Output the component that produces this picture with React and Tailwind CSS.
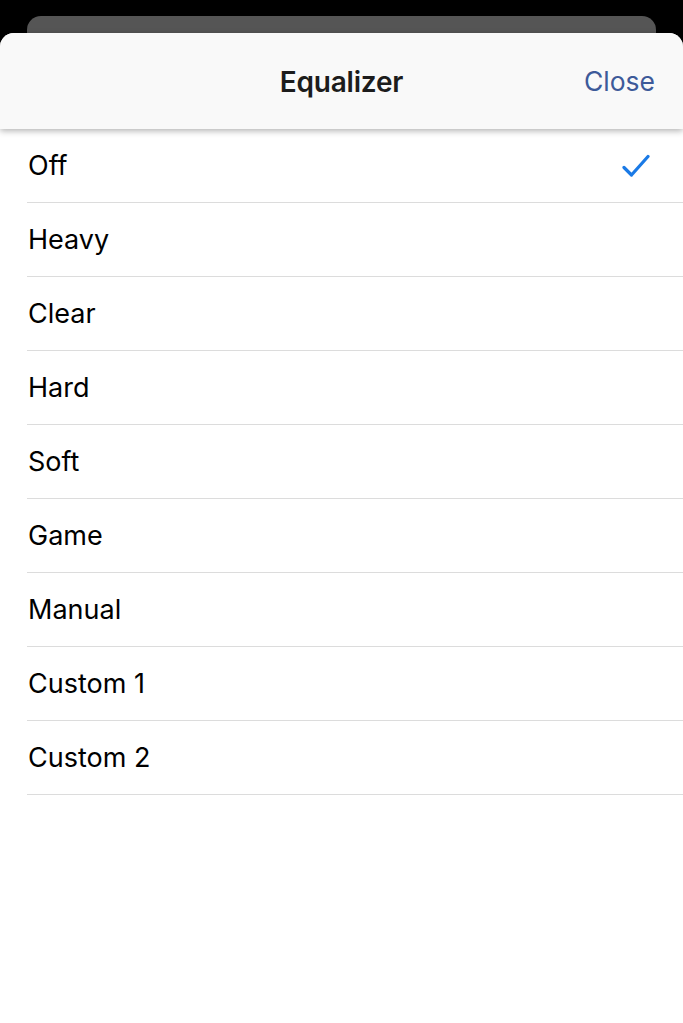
import React from "react";

const items = ["Off", "Heavy", "Clear", "Hard", "Soft", "Game", "Manual", "Custom 1", "Custom 2"];

export default function App() {
  return (
    <div className="w-[683px] h-[1023px] bg-black flex flex-col overflow-hidden" style={{ fontFamily: "Inter, 'Noto Sans', sans-serif" }}>
      <div className="h-[16px] shrink-0" />
      <div className="mx-[27px] h-[17px] shrink-0 bg-[#555555] rounded-t-[14px]" />
      <div className="flex-1 bg-white rounded-t-[14px] flex flex-col">
        <div className="relative z-10 h-[96px] shrink-0 bg-[#f9f9f9] rounded-t-[14px] shadow-[0_2px_6px_rgba(0,0,0,0.3)] flex items-center justify-center">
          <span className="text-[28px] font-semibold text-[#1c1c1c] tracking-[-0.2px] pt-[2px]">Equalizer</span>
          <span className="absolute right-[28px] top-1/2 -translate-y-1/2 text-[26.5px] text-[#3d5a99] pt-[2px]">Close</span>
        </div>
        <div className="flex flex-col pl-[27px]">
          {items.map((t, i) => (
            <div key={t} className="h-[74px] flex items-center justify-between border-b border-[#dcdcdc] pr-[33px]">
              <span className="pl-[1px] text-[27px] text-black tracking-[0px] pt-[2px]">{t}</span>
              {i === 0 && (
                <svg width="28" height="24" viewBox="0 0 28 24" fill="none">
                  <path d="M2 13.5 L9.5 21 L26 2.5" stroke="#1a7ae6" strokeWidth="3.2" strokeLinecap="round" strokeLinejoin="round" />
                </svg>
              )}
            </div>
          ))}
        </div>
      </div>
    </div>
  );
}
